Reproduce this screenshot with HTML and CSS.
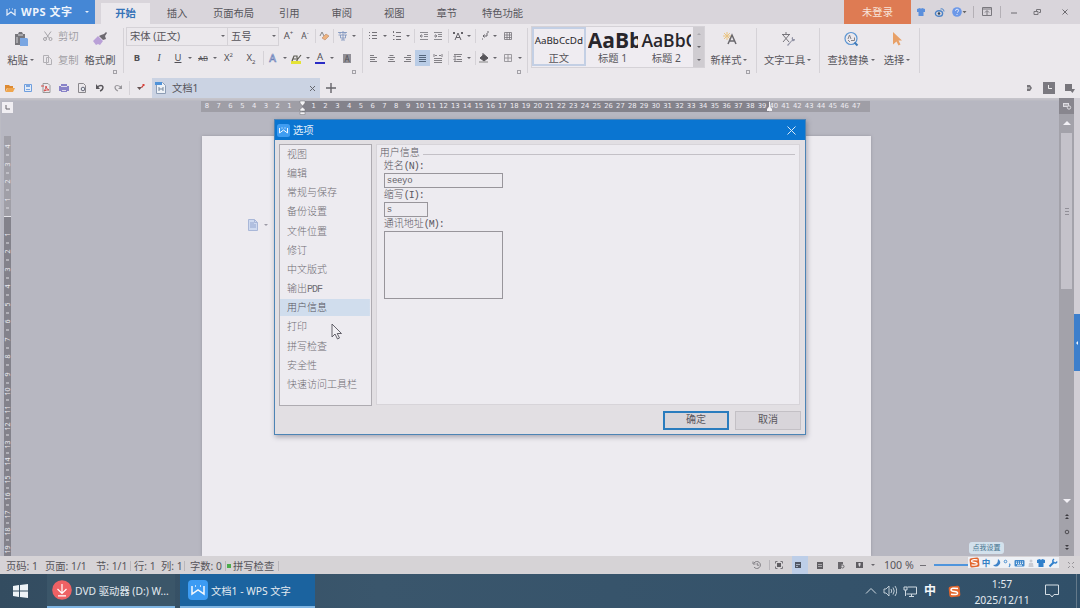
FILE: index.html
```html
<!DOCTYPE html>
<html lang="zh-CN">
<head>
  <meta charset="UTF-8" />
  <title>文档1 - WPS 文字</title>
  <link rel="stylesheet" href="styles.css">
</head>
<body>
  <!-- 标题栏 -->
  <header class="titlebar">
    <div class="brand">
      <svg class="brand-logo" width="10" height="8" viewBox="0 0 10 8"><path d="M1 1v6l4-3 4 3V1M3 1h1M6 1h1" /></svg>
      <b>WPS 文字</b>
      <i class="caret white"></i>
    </div>
    <nav class="tabs">
      <a class="active">开始</a><a>插入</a><a class="wide">页面布局</a><a>引用</a><a>审阅</a><a>视图</a><a>章节</a><a class="wide">特色功能</a>
    </nav>
    <div class="login">未登录</div>
    <div class="win-tools">
      <svg width="20" height="12" viewBox="0 0 20 12"><path fill="#5b8fdc" d="M6 3l3-1q1 1.500 2 0l3 1v3h-1.500v4h-5V6H6z" /></svg>
      <svg width="18" height="12" viewBox="0 0 18 12"><ellipse cx="8" cy="7.500" rx="3.600" ry="2.800" fill="none" stroke="#4b83c8" stroke-width="1.400" /><circle cx="8" cy="7.500" r="1.200" fill="#345" /><path d="M9.500 3q3-1 3.500 2.500" fill="none" stroke="#4b83c8" /></svg>
      <svg width="19" height="12" viewBox="0 0 19 12"><circle cx="8" cy="6" r="4.800" fill="#6c98e8" /><path d="M6.500 4.800q0-1.600 1.600-1.600T9.600 4.800Q9.600 5.600 8 6.500M8 8v1" fill="none" stroke="#dfe8fa" /><path d="M13.500 5h4l-2 2.200z" fill="#666" /></svg>
      <i class="sep first"></i>
      <svg width="26" height="12" viewBox="0 0 26 12"><path d="M8.500 1.500h9v8h-9zM8.500 3h9M13 9V5M11 6.500L13 4.500l2 2" fill="none" stroke="#7a787e" /></svg>
      <i class="sep"></i>
      <svg width="27" height="12" viewBox="0 0 27 12"><path d="M10 7h6" stroke="#6d6b70" /></svg>
      <svg width="20" height="12" viewBox="0 0 20 12"><path d="M6 5.500h4v3h-4zM8.500 5V3.500h4v3H11" fill="none" stroke="#77757a" /></svg>
      <svg width="34" height="12" viewBox="0 0 34 12"><path d="M14.500 3.500l5 5M19.500 3.500l-5 5" stroke="#6d6b70" /></svg>
    </div>
  </header>

  <!-- 功能区 -->
  <section class="ribbon">
    <div class="group clipboard">
      <button class="big paste">
        <svg width="16" height="16" viewBox="0 0 16 16"><path fill="#77767b" d="M2 3h3l1-2h3l1 2h2v4H7v7H2z" /><path stroke="#d7d5da" d="M5 4h5M4 6v6" /><path fill="#7aa6e2" d="M7 7h7l1 1v7H7z" /></svg>
        <span>粘贴<i class="caret"></i></span>
      </button>
      <div class="stack">
        <span><svg width="12" height="12" viewBox="0 0 12 12"><path d="M2.500 1.500l5 7M9 1.500l-5 7" stroke="#a5a3a8" fill="none" /><circle cx="3" cy="9" r="1.500" fill="none" stroke="#a5a3a8" /><circle cx="8.500" cy="9" r="1.500" fill="none" stroke="#a5a3a8" /></svg>剪切</span>
        <span><svg width="12" height="12" viewBox="0 0 12 12"><path d="M1.500 1.500h5v7h-5zM4.500 3.500h3l2 2v5h-5z" fill="#ebe8ec" stroke="#b2b0b5" /></svg>复制</span>
      </div>
      <button class="big brush">
        <svg width="16" height="16" viewBox="0 0 16 16"><path fill="#6d6970" d="M9 4l3-1 2-2 1 1-2 3 1 3-3 1-4-4z" /><path fill="#b9a0d7" d="M6 5l5 5-3 4-2-1-2 1-3-4z" /></svg>
        <span>格式刷</span>
      </button>
      <i class="corner"></i>
    </div>

    <div class="group font">
      <div class="row row-font-1">
        <div class="combo"><span class="family">宋体 (正文)<i class="caret"></i></span><span class="size">五号<i class="caret"></i></span></div>
        <span class="glyph">A<sup>+</sup></span>
        <span class="glyph small">A<sup>-</sup></span>
        <i class="sep"></i>
        <svg width="12" height="12" viewBox="0 0 12 12"><path d="M2 6l2-4 2 4" fill="none" stroke="#888" /><path d="M4 8l4-4 3 2-4 4z" fill="#eeb27e" stroke="#bb8865" stroke-width=".6" /></svg>
        <i class="sep"></i>
        <svg width="12" height="12" viewBox="0 0 12 12"><path d="M1 2.500h9M3 2v2M8 2v2M1.500 5h8.500M6 1v9M3.500 5v3h5V5M4 10h4" stroke="#7891bd" fill="none" stroke-width=".8" /></svg>
        <i class="caret"></i>
      </div>
      <div class="row row-font-2">
        <b class="glyph">B</b>
        <em class="glyph">I</em>
        <u class="glyph">U</u>
        <i class="caret"></i>
        <s class="glyph strike">AB</s>
        <i class="caret"></i>
        <span class="glyph">X<sup>2</sup></span>
        <span class="glyph">X<sub>2</sub></span>
        <i class="sep"></i>
        <span class="glyph outline">A</span>
        <i class="caret"></i>
        <svg width="13" height="13" viewBox="0 0 13 13"><path fill="#e5e336" d="M1 9h10v3H1z" /><path d="M2 9l2-5h3v5M3 7h3M7 8l4-5" stroke="#5c5b52" stroke-width="1.200" fill="none" /></svg>
        <i class="caret"></i>
        <span class="glyph colored">A</span>
        <i class="caret"></i>
        <span class="glyph shaded">A</span>
      </div>
      <i class="corner"></i>
    </div>

    <div class="group para">
      <div class="row row-para-1">
        <svg width="10" height="10" viewBox="0 0 10 10"><path d="M1 1.500h1M1 4.500h1M1 7.500h1M4 1.500h5M4 4.500h5M4 7.500h5" stroke="#747278" /></svg>
        <i class="caret"></i>
        <svg width="10" height="12" viewBox="0 0 10 12"><path d="M1.500 1v2M1 5.500h1.500M1 9.500h1.500M4 2.500h5M4 6.500h5M4 9.500h5" stroke="#747278" /></svg>
        <i class="caret"></i>
        <i class="sep"></i>
        <svg width="10" height="10" viewBox="0 0 10 10"><path d="M1 1.500h8M5 3.500h4M5 5.500h4M1 8.500h8M4 5H1M3 3.500L1 5l2 1.500" stroke="#747278" fill="none" stroke-width=".8" /></svg>
        <svg width="10" height="10" viewBox="0 0 10 10"><path d="M1 1.500h8M5 3.500h4M5 5.500h4M1 8.500h8M1 5h3M2 3.500L4 5 2 6.500" stroke="#747278" fill="none" stroke-width=".8" /></svg>
        <i class="sep"></i>
        <svg width="12" height="10" viewBox="0 0 12 10"><path d="M3 9l3-7 3 7M4 6.500h4M1 1l2 2M3 1L1 3M9 1l2 2M11 1L9 3" stroke="#646268" fill="none" /></svg>
        <i class="caret"></i>
        <i class="sep"></i>
        <svg width="10" height="10" viewBox="0 0 10 10"><path d="M7 2v3H3M4.500 3.500L3 5l1.500 1.500M2 8h1M7 1h2" stroke="#66646a" fill="none" /></svg>
        <i class="caret"></i>
        <svg width="10" height="10" viewBox="0 0 10 10"><path d="M1.500 1.500h7v7h-7zM1.500 4h7M1.500 6.500h7M4 1.500v7M6.500 1.500v7" stroke="#77757b" fill="none" stroke-width=".8" /></svg>
      </div>
      <div class="row row-para-2">
        <svg width="9" height="9" viewBox="0 0 9 9"><path d="M1 1.500h4M1 3.500h7M1 5.500h5M1 7.500h7" stroke="#7d7b80" /></svg>
        <svg width="9" height="9" viewBox="0 0 9 9"><path d="M2.500 1.500h4M1 3.500h7M2.500 5.500h4M1 7.500h7" stroke="#7d7b80" /></svg>
        <svg width="9" height="9" viewBox="0 0 9 9"><path d="M4 1.500h4M1 3.500h7M3 5.500h5M1 7.500h7" stroke="#7d7b80" /></svg>
        <span class="pressed"><svg width="9" height="9" viewBox="0 0 9 9"><path d="M1 1.500h7M1 3.500h7M1 5.500h7M1 7.500h7" stroke="#53657c" /></svg></span>
        <svg width="10" height="9" viewBox="0 0 10 9"><path d="M1 0v3M9 0v3M2 1.500h2M6 1.500h2M1 4.500h8M1 6.500h8M1 8.500h8" stroke="#77757b" stroke-width=".9" /></svg>
        <i class="sep"></i>
        <svg width="10" height="10" viewBox="0 0 10 10"><path d="M1 1.500h8M4 3.500h4M4 6.500h5M1 8.500h8M2 3v4M.5 4L2 2.500 3.500 4M.5 6L2 7.500 3.500 6" stroke="#68666c" fill="none" stroke-width=".8" /></svg>
        <i class="caret"></i>
        <i class="sep"></i>
        <svg width="12" height="10" viewBox="0 0 12 10"><path d="M5 0v3M2 5l4-3.500 4 3.500-4 3z" fill="#57555a" stroke="#57555a" /><path d="M1 9h9" stroke="#888" /></svg>
        <i class="caret"></i>
        <svg width="10" height="10" viewBox="0 0 10 10"><path d="M1.500 1.500h7v7h-7zM5 1.500v7M1.500 5h7" stroke="#8a888e" fill="none" stroke-width=".8" /></svg>
        <i class="caret"></i>
      </div>
      <i class="corner"></i>
    </div>

    <div class="group styles">
      <div class="gallery">
        <div class="style on"><span class="sample">AaBbCcDd</span><span>正文</span></div>
        <div class="style"><b class="sample h1">AaBb</b><span>标题 1</span></div>
        <div class="style"><b class="sample h2">AaBbC</b><span>标题 2</span></div>
        <div class="scroller"><i class="caret up"></i><i class="caret"></i><i class="caret more"></i></div>
      </div>
      <button class="big new-style">
        <svg width="16" height="16" viewBox="0 0 16 16"><path d="M5 1v8M1 5h8M2 2l6 6M8 2L2 8" stroke="#eac481" /><path d="M6 13l4-9 4 9M7.500 10h5" stroke="#69676c" stroke-width="1.500" fill="none" /></svg>
        <span>新样式<i class="caret"></i></span>
      </button>
      <i class="corner"></i>
    </div>

    <div class="group tools">
      <button class="big">
        <svg width="16" height="16" viewBox="0 0 16 16"><path d="M6 1v2M2 3.500h8M3 4l6 7M9 4l-6 7" stroke="#77757b" fill="none" /><path d="M7 14l5-5q-1-3 1-3v2h2q0 3-3 2l-4 5z" fill="#9293a5" /></svg>
        <span>文字工具<i class="caret"></i></span>
      </button>
    </div>

    <div class="group edit">
      <button class="big find">
        <svg width="16" height="16" viewBox="0 0 16 16"><circle cx="8" cy="7.500" r="6" fill="none" stroke="#5b95d3" stroke-width="1.200" /><path d="M11.500 11.500l3 3" stroke="#3e79b8" stroke-width="2" /><path d="M5 8l1.500-4L8 8M8 9.500h3.500v-3M5 9l2 2" fill="none" stroke="#858287" /></svg>
        <span>查找替换<i class="caret"></i></span>
      </button>
      <button class="big select">
        <svg width="16" height="16" viewBox="0 0 16 16"><path fill="#e8a067" d="M4 1l9 8.500H9.500l2 4-2 1-2-4L4 13.500z" /></svg>
        <span>选择<i class="caret"></i></span>
      </button>
    </div>
  </section>

  <!-- 快速访问工具栏与文档标签 -->
  <div class="docbar">
    <div class="quick">
      <svg width="12" height="12" viewBox="0 0 12 12"><path fill="#dd8a32" d="M1 3h4l1 1h3v2H3l-2 4z" /><path fill="#f0a64e" d="M3.500 6H11l-2 4H1.500z" /></svg>
      <svg width="12" height="12" viewBox="0 0 12 12"><path d="M2.500 2.500h7v7h-7z" fill="#e3ebf7" stroke="#6e9ede" /><path fill="#7ba6e0" d="M4 2h4v3H4zM4 7h4v1H4z" /></svg>
      <svg width="12" height="12" viewBox="0 0 12 12"><path d="M3 1.500h5l2 2v7H3z" fill="none" stroke="#999" /><path d="M1 4h3M4 9q2-2 2-5 0 3 3 4-2-.5-5 1" fill="none" stroke="#d4504c" /></svg>
      <svg width="12" height="12" viewBox="0 0 12 12"><path fill="#8882c8" d="M3 2h6v2h2v5H9v1H3V9H1V4h2z" /><path stroke="#dedbea" d="M3 4.500h6M4 8.500h4" /></svg>
      <svg width="12" height="12" viewBox="0 0 12 12"><path d="M2.500 1.500h5l2 2v7h-7z" fill="none" stroke="#8a888c" /><circle cx="7" cy="7" r="1.800" fill="#e5edf0" stroke="#667" /></svg>
      <svg width="12" height="12" viewBox="0 0 12 12"><path d="M3 5q5-3 6 0 0 3-3 4" fill="none" stroke="#58565b" stroke-width="1.400" /><path fill="#58565b" d="M2 2v5h4z" /></svg>
      <svg width="12" height="12" viewBox="0 0 12 12"><path d="M9 5Q4 2 3 5q0 3 3 4" fill="none" stroke="#99979c" stroke-width="1.200" /><path fill="#99979c" d="M10 3v4H6z" /></svg>
      <i class="sep"></i>
      <svg width="12" height="12" viewBox="0 0 12 12"><path fill="#655" d="M2 5h5L4.500 8z" /><path d="M6.500 5.500L8 4" stroke="#cf433c" stroke-width="1.200" /><path fill="#d8413a" d="M7.500 2h2v2h-2z" /></svg>
    </div>
    <div class="doc-tab">
      <svg width="14" height="14" viewBox="0 0 14 14"><path d="M2.500 1.500h6l3 3v8h-9z" fill="#eef2f7" stroke="#8d9db5" /><path fill="#4f92d8" d="M1 1h7v3H1z" /><path d="M5 6v4M9 6v4M5 8h4" stroke="#75879e" /></svg>
      <span>文档1</span>
      <svg width="9" height="9" viewBox="0 0 9 9"><path d="M2 2l5 5M7 2L2 7" stroke="#66686f" /></svg>
    </div>
    <svg class="plus" width="12" height="12" viewBox="0 0 12 12"><path d="M6 1v10M1 6h10" stroke="#66646a" stroke-width="1.400" /></svg>
    <div class="doc-tools">
      <svg width="10" height="10" viewBox="0 0 10 10"><path fill="#77757a" d="M3 2h3l2 3-2 3H3z" /><path stroke="#ddd" d="M3 5h3" /></svg>
      <svg width="12" height="12" viewBox="0 0 12 12"><path fill="#7b7980" d="M0 0h12v12H0z" /><path d="M5.500 3v3.500H9" stroke="#eee" fill="none" /></svg>
      <svg width="12" height="12" viewBox="0 0 12 12"><path fill="#77757b" d="M1 2h7v7H1zM5 7h6L8.500 11z" /></svg>
    </div>
  </div>

  <!-- 编辑区 -->
  <main class="workspace">
    <div class="left-edge">
      <div class="tab-stop"><svg width="11" height="11" viewBox="0 0 11 11"><path d="M4 3v4h4" stroke="#66646a" fill="none" /></svg></div>
      <div class="v-ruler">
        <i>4</i><i>3</i><i>2</i><i>1</i><i></i><i>1</i><i>2</i><i>3</i><i>4</i><i>5</i><i>6</i><i>7</i><i>8</i><i>9</i><i>10</i><i>11</i><i>12</i><i>13</i><i>14</i><i>15</i><i>16</i><i>17</i><i>18</i><i>19</i>
      </div>
    </div>
    <div class="canvas">
      <div class="h-ruler">
        <div class="before"><i>8</i><i>7</i><i>6</i><i>5</i><i>4</i><i>3</i><i>2</i><i>1</i></div>
        <div class="after"><i>1</i><i>2</i><i>3</i><i>4</i><i>5</i><i>6</i><i>7</i><i>8</i><i>9</i><i>10</i><i>11</i><i>12</i><i>13</i><i>14</i><i>15</i><i>16</i><i>17</i><i>18</i><i>19</i><i>20</i><i>21</i><i>22</i><i>23</i><i>24</i><i>25</i><i>26</i><i>27</i><i>28</i><i>29</i><i>30</i><i>31</i><i>32</i><i>33</i><i>34</i><i>35</i><i>36</i><i>37</i><i>38</i><i>39</i><i>40</i><i>41</i><i>42</i><i>43</i><i>44</i><i>45</i><i>46</i><i>47</i></div>
        <svg class="indent-left" width="7" height="15" viewBox="0 0 7 15"><path d="M1 1h5v2L3.500 6 1 3zM3.500 7L6 9.500V11H1V9.500zM1 12h5v2.500H1z" fill="#f4f3f6" stroke="#77757b" stroke-width=".5" /></svg>
        <svg class="indent-right" width="7" height="11" viewBox="0 0 7 11"><path d="M3.500 1v5" stroke="#f4f3f6" /><path d="M3.500 5L6 8v2H1V8z" fill="#f4f3f6" /></svg>
      </div>
      <div class="page">
        <svg width="12" height="14" viewBox="0 0 12 14"><path d="M1.500 1.500h6l3 3v8h-9z" fill="#cfdaf0" stroke="#a9b7d8" /><path d="M3 5h4M3 7h6M3 9h6" stroke="#93a5cf" /><path d="M7.500 1.500v3h3" stroke="#a9b7d8" fill="none" /></svg>
        <i class="caret"></i>
      </div>
    </div>
    <div class="v-scroll">
      <div class="scroll-head"><svg width="10" height="10" viewBox="0 0 10 10"><path fill="#dedce2" d="M1 2h6v4H1z" /><path d="M3 3v2M5 3v2" stroke="#88868c" /><circle cx="7" cy="6.500" r="1.700" fill="#88868c" stroke="#dedce2" /></svg></div>
      <i class="arrow arrow-up"></i>
      <div class="thumb"><i></i><i></i><i></i></div>
      <div class="scroll-foot">
        <i class="arrow arrow-down"></i>
        <svg width="8" height="8" viewBox="0 0 8 8"><path d="M2 4l2-2 2 2zM2 7l2-2 2 2z" fill="#3d3b40" /></svg>
        <svg width="8" height="8" viewBox="0 0 8 8"><circle cx="4" cy="4" r="1.800" stroke="#4d4b50" fill="none" /></svg>
        <svg width="8" height="8" viewBox="0 0 8 8"><path d="M2 1l2 2 2-2zM2 4l2 2 2-2z" fill="#3d3b40" /></svg>
      </div>
    </div>
    <div class="side-strip"><div class="side-handle"><i></i></div></div>
  </main>

  <!-- 状态栏 -->
  <footer class="statusbar">
    <div class="counts">
      <span>页码: 1</span><span>页面: 1/1</span><span>节: 1/1</span><span class="line">行: 1</span><span>列: 1</span><span class="line">字数: 0</span><span class="line spell"><i class="dot"></i>拼写检查</span><i class="sep"></i>
    </div>
    <div class="views">
      <svg width="10" height="10" viewBox="0 0 10 10"><path d="M2 3a3.500 3.500 0 1 1 0 4M1 1.500V4h2.500M5.200 3v2.200H7" stroke="#77757a" fill="none" stroke-width=".9" /></svg>
      <i class="sep"></i>
      <svg width="10" height="10" viewBox="0 0 10 10"><path fill="#5f5d62" d="M3 3h4v4H3z" /><path d="M1.500 3.500v-2h2M6.500 1.500h2v2M1.500 6.500v2h2M6.500 8.500h2v-2" stroke="#77757a" fill="none" /></svg>
      <span class="current"><svg width="8" height="8" viewBox="0 0 8 8"><path fill="#4f5665" d="M1 1h6v6H1z" /><path d="M2 3.500h4M2 5.500h2" stroke="#c9d4e6" stroke-width=".7" /></svg></span>
      <svg width="8" height="8" viewBox="0 0 8 8"><path fill="#5f5d62" d="M1 1h6v7H1z" /><path d="M2 3.500h4M2 5.500h4" stroke="#c9c7cc" stroke-width=".7" /></svg>
      <svg width="8" height="8" viewBox="0 0 8 8"><path fill="#69676c" d="M1 1h5v2L4 4v4H1z" /><circle cx="5.500" cy="5.500" r="1.500" fill="none" stroke="#69676c" /></svg>
      <svg width="8" height="8" viewBox="0 0 8 8"><path fill="#5f5d62" d="M1 1h7v6H1z" /><path fill="#dbd9de" d="M3.500 2h2v2l-1 2-1-2z" /></svg>
      <i class="caret"></i>
      <span class="zoom">100 %</span>
      <i class="minus"></i>
      <i class="slider"></i>
      <svg width="10" height="10" viewBox="0 0 10 10"><path d="M2 2l2 2M8 2L6 4M2 8l2-2M8 8L6 6" stroke="#77757a" stroke-dasharray="1 1" /></svg>
    </div>
  </footer>

  <!-- 任务栏 -->
  <div class="taskbar">
    <div class="start"><svg width="15" height="14" viewBox="0 0 15 14"><path fill="#eef3f7" d="M0 2l6-1v5.500H0zM7 1l8-1v6.500H7zM0 7.500h6V13l-6-1zM7 7.500h8V14l-8-1z" /></svg></div>
    <div class="task">
      <svg width="20" height="20" viewBox="0 0 20 20"><circle cx="10" cy="10" r="9.800" fill="#ee6164" /><path d="M10 4v9M5.500 9l4.500 4.500L14.500 9M6 15.800h8" stroke="#fff" stroke-width="1.200" fill="none" /></svg>
      <span>DVD 驱动器 (D:) W...</span>
    </div>
    <div class="task focused">
      <svg width="20" height="20" viewBox="0 0 20 20"><rect width="20" height="20" rx="4" fill="#3c9bf3" /><path d="M4 6v8l6-4 6 4V6M7 6h1M12 6h1" stroke="#f4f8fd" stroke-width="1.500" fill="none" /></svg>
      <span>文档1 - WPS 文字</span>
    </div>
    <div class="tray">
      <svg width="12" height="14" viewBox="0 0 12 14"><path d="M1 9.500l5-5 5 5" stroke="#cfd9e1" fill="none" /></svg>
      <svg width="14" height="14" viewBox="0 0 14 14"><path d="M1 5h2l3-3v10L3 9H1zM8 5q1.500 2 0 4M10 3.500q2.500 3.500 0 7M12 2q3.500 5 0 10" stroke="#cfd9e1" fill="none" stroke-width=".9" /></svg>
      <svg width="14" height="14" viewBox="0 0 14 14"><path d="M4.500 3h9v7H3.500M1 3h3v3H1zM2.500 6v6M6 12.500h5M8.500 10v2" stroke="#cfd9e1" fill="none" /></svg>
      <b>中</b>
      <svg class="sogou" width="13" height="13" viewBox="0 0 13 13"><rect x="1" y="1" width="11" height="11" rx="2" fill="#e2662d" transform="rotate(-6 6.500 6.500)" /><path d="M10 3.500Q3 2.500 3 4.800 3 6.300 6.500 6.500 10 6.800 9.500 8.500 9 10 3 9.300" stroke="#fff" stroke-width="1.500" fill="none" /></svg>
      <div class="clock">1:57<br />2025/12/11</div>
      <svg class="notice" width="14" height="14" viewBox="0 0 14 14"><path d="M.5 1h13v9.500H9l-2 2.500-2-2.500H.5z" stroke="#d5dee5" fill="none" /></svg>
      <i class="desktop-edge"></i>
    </div>
  </div>

  <!-- 选项对话框 -->
  <div class="dialog">
    <div class="dialog-title">
      <svg width="13" height="13" viewBox="0 0 13 13"><rect width="13" height="13" rx="2.500" fill="#3f9df2" /><path d="M2.500 4v5l4-3 4 3V4M4.500 4h1M7.500 4h1" stroke="#f2f8ff" fill="none" /></svg>
      <span>选项</span>
      <svg width="11" height="11" viewBox="0 0 11 11"><path d="M1.500 1.500l8 8M9.500 1.500l-8 8" stroke="#d8e9f8" /></svg>
    </div>
    <div class="dialog-body">
      <ul class="option-list">
        <li>视图</li>
        <li>编辑</li>
        <li>常规与保存</li>
        <li>备份设置</li>
        <li>文件位置</li>
        <li>修订</li>
        <li>中文版式</li>
        <li>输出<span class="half">PDF</span></li>
        <li class="selected">用户信息</li>
        <li>打印</li>
        <li>拼写检查</li>
        <li>安全性</li>
        <li>快速访问工具栏</li>
      </ul>
      <form class="user-info">
        <h2>用户信息</h2>
        <label for="name">姓名<span class="half">(N):</span></label>
        <input type="text" id="name" value="seeyo" />
        <label for="initials">缩写<span class="half">(I):</span></label>
        <input type="text" id="initials" value="s" />
        <label for="address">通讯地址<span class="half">(M):</span></label>
        <textarea id="address"></textarea>
      </form>
    </div>
    <div class="dialog-actions">
      <button class="primary">确定</button>
      <button>取消</button>
    </div>
  </div>

  <!-- 输入法浮动条 -->
  <div class="ime-tip">点我设置</div>
  <div class="ime-bar">
    <svg width="11" height="11" viewBox="0 0 13 13"><rect x="1" y="1" width="11" height="11" rx="2" fill="#e2662d" transform="rotate(-6 6.500 6.500)" /><path d="M10 3.500Q3 2.500 3 4.800 3 6.300 6.500 6.500 10 6.800 9.500 8.500 9 10 3 9.300" stroke="#fff" stroke-width="1.500" fill="none" /></svg>
    <b>中</b>
    <svg width="10" height="10" viewBox="0 0 10 10"><path fill="#3e83c9" d="M6 1q4 3 1 6-3 3-6 0 5 0 5-6z" /></svg>
    <svg width="9" height="10" viewBox="0 0 9 10"><circle cx="2.500" cy="3.500" r="1.300" stroke="#4a8fd0" fill="none" /><path d="M6 6q2 0 0 3" stroke="#4a8fd0" stroke-width="1.200" fill="none" /></svg>
    <svg width="11" height="10" viewBox="0 0 11 10"><rect x=".5" y="2" width="10" height="6.500" rx="1" fill="#4188cb" /><path d="M2 4h7M2 5.500h7" stroke="#e9f0f8" stroke-dasharray="1 1" /><path d="M3 7.200h5" stroke="#e9f0f8" /></svg>
    <svg width="8" height="10" viewBox="0 0 8 10"><circle cx="4" cy="3" r="1.500" fill="#c9cbd3" /><path fill="#c9cbd3" d="M2 5h4l.5 4h-5z" /></svg>
    <svg width="10" height="10" viewBox="0 0 10 10"><path fill="#2f7fcb" d="M1 2l2.500-1Q5 2.500 6.500 1L9 2v3H7.500v4h-5V5H1z" /></svg>
    <svg width="10" height="10" viewBox="0 0 10 10"><path d="M1.500 8.500l4-4" stroke="#2f7fcb" stroke-width="2" /><path d="M6 1q-2.500 2 0 3.500 2 1.500 3-1" stroke="#2f7fcb" stroke-width="1.500" fill="none" /></svg>
  </div>

  <!-- 鼠标指针 -->
  <svg class="cursor" width="12" height="18" viewBox="0 0 12 18"><path d="M1 1v13l3-3 2.500 5 2-1-2.300-4.500H10.500z" fill="#f1eff3" stroke="#55535c" stroke-width=".9" /></svg>
</body>
</html>
```
FILE: styles.css
```css
/* ===== Variables y base ===== */
:root {
  --font-ui: "Noto Sans", "Noto Sans CJK SC", sans-serif;
  --font-dialog: "Liberation Mono", "Noto Sans CJK SC", monospace;
  --color-text: #57555b;
  --color-bar: #d9d5db;
  --color-ribbon: #ebe8ec;
  --color-page: #edebf0;
  --color-canvas: #b7b7c1;
  --color-line: #d5d2d7;
  --color-blue: #0a75d1;
}

* {
  margin: 0;
  padding: 0;
  box-sizing: border-box;
}

body {
  position: relative;
  display: flex;
  flex-direction: column;
  width: 1080px;
  height: 608px;
  overflow: hidden;
  font: 10.3px/14px var(--font-ui);
  color: var(--color-text);
  background: var(--color-ribbon);
  white-space: nowrap;
}

svg {
  display: block;
  flex: none;
}

button {
  border: 0;
  background: none;
  font: inherit;
  color: inherit;
}

.caret {
  flex: none;
  display: inline-block;
  width: 0;
  height: 0;
  border: 2px solid transparent;
  border-top: 2.5px solid #67656b;
  border-bottom: 0;
}

.caret.white {
  border-top-color: #e6eefa;
}

.sep {
  flex: none;
  width: 1px;
  height: 14px;
  background: var(--color-line);
}

/* ===== Title bar ===== */
.titlebar {
  display: flex;
  flex: none;
  height: 24px;
  background: var(--color-bar);
}

.brand {
  display: flex;
  align-items: center;
  width: 95px;
  padding-left: 6px;
  background: #4587d5;
  color: #eef4fc;
}

.brand-logo path {
  fill: none;
  stroke: #e6effb;
  stroke-width: 1.2;
}

.brand b {
  width: 64px;
  margin-left: 5px;
  font-size: 11px;
  letter-spacing: 0.5px;
}

.tabs {
  display: flex;
  width: 749px;
  padding: 3px 0 0 6px;
}

.tabs a {
  width: 52.5px;
  line-height: 21px;
  text-align: center;
}

.tabs a:nth-child(2) {
  width: 54px;
}

.tabs .wide {
  width: 59px;
}

.tabs .active {
  width: 49px;
  background: var(--color-ribbon);
  color: #3673b8;
  font-weight: 700;
}

.login {
  width: 67px;
  background: #de7b53;
  color: #f8e4da;
  line-height: 24px;
  text-align: center;
}

.win-tools {
  display: flex;
  align-items: center;
  width: 169px;
}

.win-tools .sep {
  height: 12px;
  background: #b4b0b6;
}

.win-tools .first {
  margin-left: 5px;
}

/* ===== Ribbon ===== */
.ribbon {
  display: flex;
  flex: none;
  height: 54px;
}

.group {
  position: relative;
  height: 50px;
}

.group::after {
  content: "";
  position: absolute;
  top: 4px;
  right: 0;
  width: 1px;
  height: 45px;
  background: var(--color-line);
}

.corner {
  position: absolute;
  right: 7px;
  bottom: 0;
  width: 4px;
  height: 4px;
  border: 1px solid #a3a1a7;
}

.big {
  display: flex;
  flex-direction: column;
  align-items: center;
  padding-top: 7px;
}

.big span {
  display: flex;
  align-items: center;
  gap: 2px;
  margin-top: 6px;
}

.clipboard {
  display: flex;
  width: 124px;
}

.paste {
  width: 41px;
}

.stack {
  display: flex;
  flex-direction: column;
  gap: 10px;
  width: 43px;
  padding: 5px 0 0 1px;
  color: #a19fa5;
}

.stack span {
  display: flex;
  align-items: center;
  gap: 4px;
}

.brush {
  width: 32px;
}

.row {
  display: grid;
  align-items: center;
  justify-items: center;
  height: 22px;
}

.font {
  width: 239px;
  padding: 1px 5px 0 2px;
}

.para {
  width: 165px;
  padding: 1px 0 0 1px;
}

.row-font-1 { grid-template-columns: 153px 19px 14px 6px 12px 6px 14px 8px; }
.row-font-2 { grid-template-columns: 22px 22px 16px 8px 18px 5px 23px 22px 2px 17px 8px 15px 8px 16px 8px 22px; }
.row-para-1 { grid-template-columns: 18px 6px 17px 6px 6px 13px 16px 4px 16px 6px 6px 13px 8px 18px; }
.row-para-2 { grid-template-columns: 19px 16px 16px 15px 15px 6px 14px 8px 4px 14px 8px 18px 6px; }

.combo {
  display: flex;
  width: 153px;
  height: 19px;
  border: 1px solid var(--color-line);
}

.combo span {
  display: flex;
  align-items: center;
  justify-content: space-between;
  padding: 0 2px 0 3px;
}

.family {
  width: 101px;
  border-right: 1px solid var(--color-line);
}

.size {
  width: 50px;
}

.glyph {
  font: 9.5px/12px var(--font-ui);
  color: #514f55;
}

.glyph sup,
.glyph sub {
  font-size: 6px;
  line-height: 0;
}

b.glyph { font-weight: 700; }
em.glyph { font-family: "Liberation Serif", serif; font-style: italic; }
.glyph.small { font-size: 8.5px; }
.glyph.strike { font-size: 7.5px; }

.glyph.outline {
  color: #f3f3fa;
  font-size: 10.5px;
  -webkit-text-stroke: 0.7px #6c82ba;
}

.glyph.colored {
  padding: 0 2px;
  border-bottom: 2px solid #2a2cc5;
  line-height: 10px;
}

.glyph.shaded {
  width: 8px;
  background: #918f96;
  line-height: 9px;
  text-align: center;
  font-size: 8px;
}

.pressed {
  display: grid;
  place-items: center;
  width: 15px;
  height: 16px;
  background: #b9cce6;
}

.styles {
  display: flex;
  width: 229px;
  padding: 2px 0 0 3px;
}

.gallery {
  display: flex;
  width: 174px;
  height: 42px;
  border: 1px solid var(--color-line);
  background: #efecf1;
}

.style {
  display: flex;
  flex-direction: column;
  align-items: center;
  width: 54px;
  overflow: hidden;
}

.style.on {
  height: 39px;
  border: 2px solid #c3cfe4;
}

.sample {
  height: 24px;
  color: #28262b;
  font-size: 9.8px;
  line-height: 24px;
}

.style.on .sample {
  height: 22px;
}

.sample.h1,
.sample.h2 {
  align-self: flex-start;
  width: 50px;
  margin-left: 2px;
  overflow: hidden;
  font-family: "Open Sans", sans-serif;
  font-size: 21px;
  font-weight: 700;
  line-height: 27px;
}

.sample.h2 {
  font-size: 17.5px;
  font-weight: 600;
}

.scroller {
  display: flex;
  flex-direction: column;
  align-items: center;
  justify-content: space-around;
  width: 11px;
  margin-left: auto;
  background: #cfccd1;
}

.caret.up {
  border-top: 0;
  border-bottom: 2.5px solid #aaa8ae;
}

.caret.more {
  box-shadow: 0 -4px 0 -1px #67656b;
}

.new-style {
  width: 48px;
  padding-top: 5px;
}

.new-style svg {
  margin-left: 2px;
}

.tools {
  width: 63px;
  padding-left: 7px;
}

.edit {
  display: flex;
  width: 100px;
}

.find {
  width: 62px;
}

.select {
  width: 30px;
}

/* ===== Document tabs ===== */
.docbar {
  display: flex;
  flex: none;
  align-items: center;
  height: 20px;
}

.quick {
  display: flex;
  align-items: center;
  gap: 6px;
  width: 152px;
  padding-left: 4px;
}

.quick .sep {
  margin: 0 -1px 0 -1px;
}

.doc-tab {
  display: flex;
  align-items: center;
  width: 168px;
  height: 20px;
  padding: 0 3px 0 2px;
  background: #cbd3e3;
}

.doc-tab span {
  margin: 0 auto 0 4px;
}

.plus {
  margin-left: 5px;
}

.doc-tools {
  display: flex;
  align-items: center;
  gap: 9px;
  margin-left: auto;
  padding-right: 4px;
}

/* ===== Workspace ===== */
.workspace {
  display: flex;
  flex: none;
  height: 458px;
  background: var(--color-canvas);
  box-shadow: inset 0 2px 2px #c6c4cb;
}

.left-edge {
  width: 201px;
  padding: 4px 0 0 2px;
}

.tab-stop {
  width: 11px;
  height: 11px;
  background: #f0eef2;
}

.v-ruler {
  display: flex;
  flex-direction: column;
  width: 7px;
  height: 420px;
  margin: 23px 0 0 2px;
  padding-top: 2px;
  overflow: hidden;
  background: linear-gradient(#a09fa7 80px, #e4e3e8 80px, #e4e3e8 81px, #83828b 81px);
}

.v-ruler i {
  flex: none;
  height: 17.5px;
  background: linear-gradient(#e0dfe5, #e0dfe5) center top / 3px 1px no-repeat;
  writing-mode: vertical-rl;
  transform: rotate(180deg);
  color: #eceaf0;
  font: 7px/7px var(--font-ui);
  text-align: center;
}

.v-ruler i:nth-child(5) {
  visibility: hidden;
}

.canvas {
  width: 858px;
  padding-top: 3px;
}

.h-ruler {
  position: relative;
  display: flex;
  width: 669px;
  height: 11px;
  background: linear-gradient(90deg, #9f9ea6 101px, #83828b 101px, #83828b 568px, #9f9ea6 568px);
}

.before {
  display: flex;
  width: 101px;
}

.after {
  display: flex;
  padding-left: 5.8px;
}

.h-ruler i {
  flex: none;
  width: 11.81px;
  color: #eeecf2;
  font: 6.8px/11px "DejaVu Sans", sans-serif;
  text-align: center;
}

.indent-left {
  position: absolute;
  left: 98px;
  top: -1px;
}

.indent-right {
  position: absolute;
  left: 565px;
  top: 0;
}

.page {
  display: flex;
  align-items: center;
  gap: 5px;
  width: 669px;
  height: 420px;
  margin: 24px 0 0 1px;
  padding: 0 0 242px 45px;
  background: var(--color-page);
  box-shadow: 0 0 3px #9795a0;
}

.page .caret {
  border-top-color: #9c9aa5;
}

.v-scroll {
  display: flex;
  flex-direction: column;
  align-items: center;
  width: 15px;
  background: #a3a2aa;
}

.scroll-head {
  display: grid;
  place-items: center;
  width: 15px;
  height: 16px;
  background: #88868e;
}

.arrow {
  border: 4px solid transparent;
}

.arrow-up {
  border-top: 0;
  border-bottom-color: #f2f0f5;
  margin: 7px 0 8px;
}

.arrow-down {
  border-bottom: 0;
  border-top-color: #f2f0f5;
}

.thumb {
  display: flex;
  flex-direction: column;
  align-items: center;
  justify-content: center;
  gap: 2px;
  width: 11px;
  height: 156px;
  background: #c4c2ca;
}

.thumb i {
  width: 4px;
  height: 1px;
  background: #918f97;
}

.scroll-foot {
  display: flex;
  flex-direction: column;
  align-items: center;
  gap: 8px;
  margin: auto 0 4px;
}

.scroll-foot .arrow {
  margin-bottom: 1px;
}

.side-strip {
  width: 6px;
  padding-top: 216px;
  background: #d1ced5;
}

.side-handle {
  display: grid;
  place-items: center;
  height: 57px;
  background: #3d7fcc;
}

.side-handle i {
  border: 2px solid transparent;
  border-left: 0;
  border-right-color: #eef4fb;
}

/* ===== Status bar ===== */
.statusbar {
  display: flex;
  flex: none;
  align-items: center;
  justify-content: space-between;
  height: 18px;
  background: #d6d3d6;
}

.counts,
.views {
  display: flex;
  align-items: center;
}

.counts {
  padding: 1px 0 0 6px;
}

.counts .sep,
.views .sep {
  height: 10px;
  background: #b9b6bb;
}

.counts span:nth-child(1) { width: 39px; }
.counts span:nth-child(2) { width: 51px; }
.counts span:nth-child(3) { width: 34px; }
.counts span:nth-child(4) { width: 31px; }
.counts span:nth-child(5) { width: 23px; }
.counts span:nth-child(6) { width: 41px; }

.counts .line {
  padding-left: 4px;
  background: linear-gradient(#b9b6bb, #b9b6bb) left center / 1px 10px no-repeat;
}

.counts .line:nth-child(6) {
  padding-left: 6px;
}

.counts .spell {
  display: flex;
  align-items: center;
  gap: 2px;
  width: 53px;
  padding-left: 2px;
}

.dot {
  width: 4px;
  height: 4px;
  background: #4cab4c;
}

.views {
  width: 328px;
}

.views .sep {
  margin: 0 4px 0 7px;
}

.current {
  display: grid;
  place-items: center;
  width: 16px;
  height: 18px;
  margin: 0 8px;
  background: #bdcee8;
}

.current + svg {
  margin-right: 13px;
}

.current + svg + svg {
  margin-right: 10px;
}

.views .caret {
  margin-left: 8px;
}

.zoom {
  width: 30px;
  margin-left: 9px;
  font-size: 10.6px;
}

.minus {
  width: 6px;
  height: 1px;
  margin-left: 6px;
  background: #727076;
}

.slider {
  width: 35px;
  height: 2px;
  margin: 0 auto 0 8px;
  background: #4f95dc;
}

.views svg:last-child {
  margin-right: 4px;
}

/* ===== Taskbar ===== */
.taskbar {
  display: flex;
  flex: none;
  height: 34px;
  background: linear-gradient(90deg, #334c60, #3a566c 35%, #315069);
  color: #e3eaf0;
}

.start {
  display: grid;
  place-items: center;
  width: 40px;
  margin-right: 7px;
}

.task {
  display: flex;
  align-items: center;
  gap: 3px;
  width: 128px;
  padding-left: 5px;
  background: #3b5669;
  border-bottom: 2px solid #7fb5e3;
}

.task span {
  margin-top: 1px;
}

.task.focused {
  width: 135px;
  margin-left: 5px;
  padding-left: 8px;
  background: #1b639f;
}

.tray {
  display: flex;
  align-items: center;
  width: 215px;
  margin-left: auto;
}

.tray > svg + svg {
  margin-left: 6px;
}

.tray b {
  margin-left: 7px;
  color: #f4f7f9;
  font-size: 12px;
}

.tray .sogou {
  margin-left: 12px;
}

.clock {
  width: 60px;
  margin: 1px 0 0 11px;
  font-size: 10.4px;
  line-height: 16px;
  text-align: center;
}

.notice {
  margin-left: 13px;
}

.desktop-edge {
  width: 1px;
  height: 34px;
  margin-left: auto;
  margin-right: 3px;
  background: #64798a;
}

/* ===== Options dialog ===== */
.dialog {
  position: absolute;
  left: 274px;
  top: 119px;
  display: flex;
  flex-direction: column;
  width: 532px;
  height: 316px;
  border: 1px solid #4d84b5;
  background: #e2dfe3;
  box-shadow: 1px 2px 5px rgba(60, 60, 80, 0.4);
  font: 10px/12px var(--font-dialog);
}

.dialog-title {
  display: flex;
  align-items: center;
  gap: 3px;
  height: 20px;
  padding: 0 8px 0 2px;
  background: var(--color-blue);
  color: #e2effa;
  font: 10.3px/20px var(--font-ui);
}

.dialog-title span {
  margin-right: auto;
}

.dialog-body {
  display: flex;
  gap: 4px;
  padding: 4px 5px 0 4px;
}

.option-list {
  width: 93px;
  height: 262px;
  border: 1px solid #aeabb1;
  background: var(--color-page);
  list-style: none;
  color: #6f6c73;
  font-weight: 300;
}

.option-list li {
  height: 19.17px;
  padding-left: 7px;
  margin-right: 1px;
  line-height: 21px;
}

.option-list .selected {
  background: linear-gradient(#d0dded, #d0dded) center / 100% 17px no-repeat;
  color: #55535c;
}

.half {
  letter-spacing: -1px;
}

.user-info {
  display: flex;
  flex-direction: column;
  align-items: flex-start;
  width: 425px;
  height: 261px;
  padding: 4px 4px 0 8px;
  border: 1px solid #d7d4d9;
  background: var(--color-page);
  color: #59565e;
}

.user-info h2 {
  display: flex;
  align-items: center;
  align-self: stretch;
  gap: 3px;
  height: 10px;
  margin-left: -5px;
  font-size: 10px;
  font-weight: 300;
}

.user-info h2::after {
  content: "";
  flex: 1;
  height: 1px;
  background: #c3c0c6;
}

.user-info label {
  height: 14px;
  line-height: 16px;
  margin-left: -1px;
  font-weight: 300;
}

.user-info input,
.user-info textarea {
  width: 119px;
  height: 15px;
  margin-left: -1px;
  padding: 1px 2px 0;
  border: 1px solid #98959b;
  background: var(--color-page);
  color: #625f66;
  font: 9px/12px "Liberation Mono", monospace;
  letter-spacing: -0.3px;
  resize: none;
}

.user-info #initials {
  width: 44px;
}

.user-info textarea {
  height: 68px;
}

.dialog-actions {
  display: flex;
  justify-content: flex-end;
  gap: 6px;
  padding: 5px 4px 0 0;
}

.dialog-actions button {
  width: 66px;
  height: 19px;
  border: 1px solid #c3c0c5;
  background: #d8d5da;
  color: #5a575e;
  line-height: 18px;
}

.dialog-actions .primary {
  border: 2px solid #2a7cbe;
  line-height: 16px;
}

/* ===== Floating items ===== */
.ime-tip {
  position: absolute;
  left: 969px;
  top: 542px;
  width: 35px;
  height: 12px;
  border-radius: 3px;
  background: #d3e1ec;
  color: #44738f;
  font-size: 7px;
  line-height: 12px;
  text-align: center;
}

.ime-bar {
  position: absolute;
  left: 968px;
  top: 557px;
  display: flex;
  align-items: center;
  justify-content: space-between;
  width: 91px;
  height: 11px;
  padding: 0 1px;
  background: #eef1f6;
}

.ime-bar b {
  color: #347fc4;
  font-size: 8.5px;
}

.cursor {
  position: absolute;
  left: 331px;
  top: 323px;
}
```
